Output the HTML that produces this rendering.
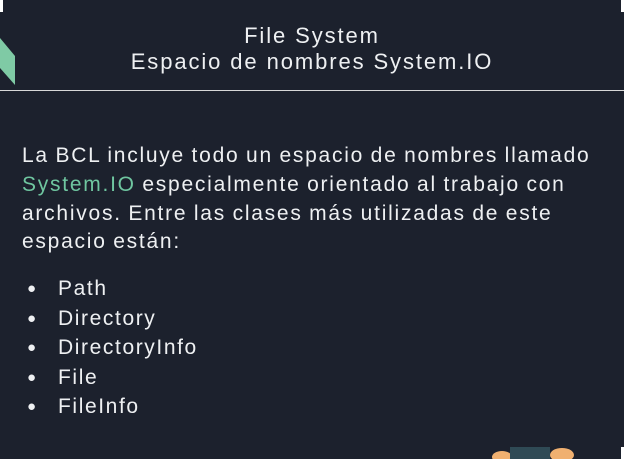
<!DOCTYPE html>
<html><head><meta charset="utf-8"><style>
body{margin:0;width:624px;height:459px;background:#1c212d;overflow:hidden;position:relative;font-family:"Liberation Sans",sans-serif;color:#eef0f2}
.t{position:absolute;left:0;width:624px;text-align:center;font-size:22px;line-height:26px;top:23px;letter-spacing:1.9px}
.hr{position:absolute;left:0;width:624px;top:90px;height:1px;background:#d8d8d8}
.p{position:absolute;left:22px;top:142px;width:600px;font-size:21px;line-height:28.8px;letter-spacing:1.75px;word-spacing:-1px}
.g{color:#6fc6a0}
ul{position:absolute;left:22px;top:274px;margin:0;padding:0;list-style:none;font-size:21px;line-height:29.6px;letter-spacing:1.6px}
li:before{content:"●";font-size:15px;display:inline-block;width:31px;padding-left:5px;vertical-align:2px;letter-spacing:0}
</style></head><body>
<div style="position:absolute;left:0;top:0;width:3px;height:12px;background:#fff"></div>
<div style="position:absolute;right:0;top:0;width:3px;height:12px;background:#fff"></div>
<svg style="position:absolute;left:0;top:38px" width="16" height="48"><polygon points="0,0 15,18 15,47 0,30" fill="#7fcaa5"/></svg>
<div class="t">File System<br>Espacio de nombres System.IO</div>
<div class="hr"></div>
<div class="p">La BCL incluye todo un espacio de nombres llamado<br><span class="g">System.IO</span> especialmente orientado al trabajo con<br>archivos. Entre las clases más utilizadas de este<br>espacio están:</div>
<ul><li>Path</li><li>Directory</li><li>DirectoryInfo</li><li>File</li><li>FileInfo</li></ul>
<svg style="position:absolute;left:490px;top:445px" width="100" height="14"><ellipse cx="12" cy="12" rx="10" ry="6" fill="#f0b070"/><rect x="20" y="2" width="40" height="14" fill="#2f4a55"/><ellipse cx="72" cy="10" rx="12" ry="7" fill="#f0b070"/></svg>
<div style="position:absolute;right:0;bottom:0;width:3px;height:12px;background:#fff"></div>
</body></html>
